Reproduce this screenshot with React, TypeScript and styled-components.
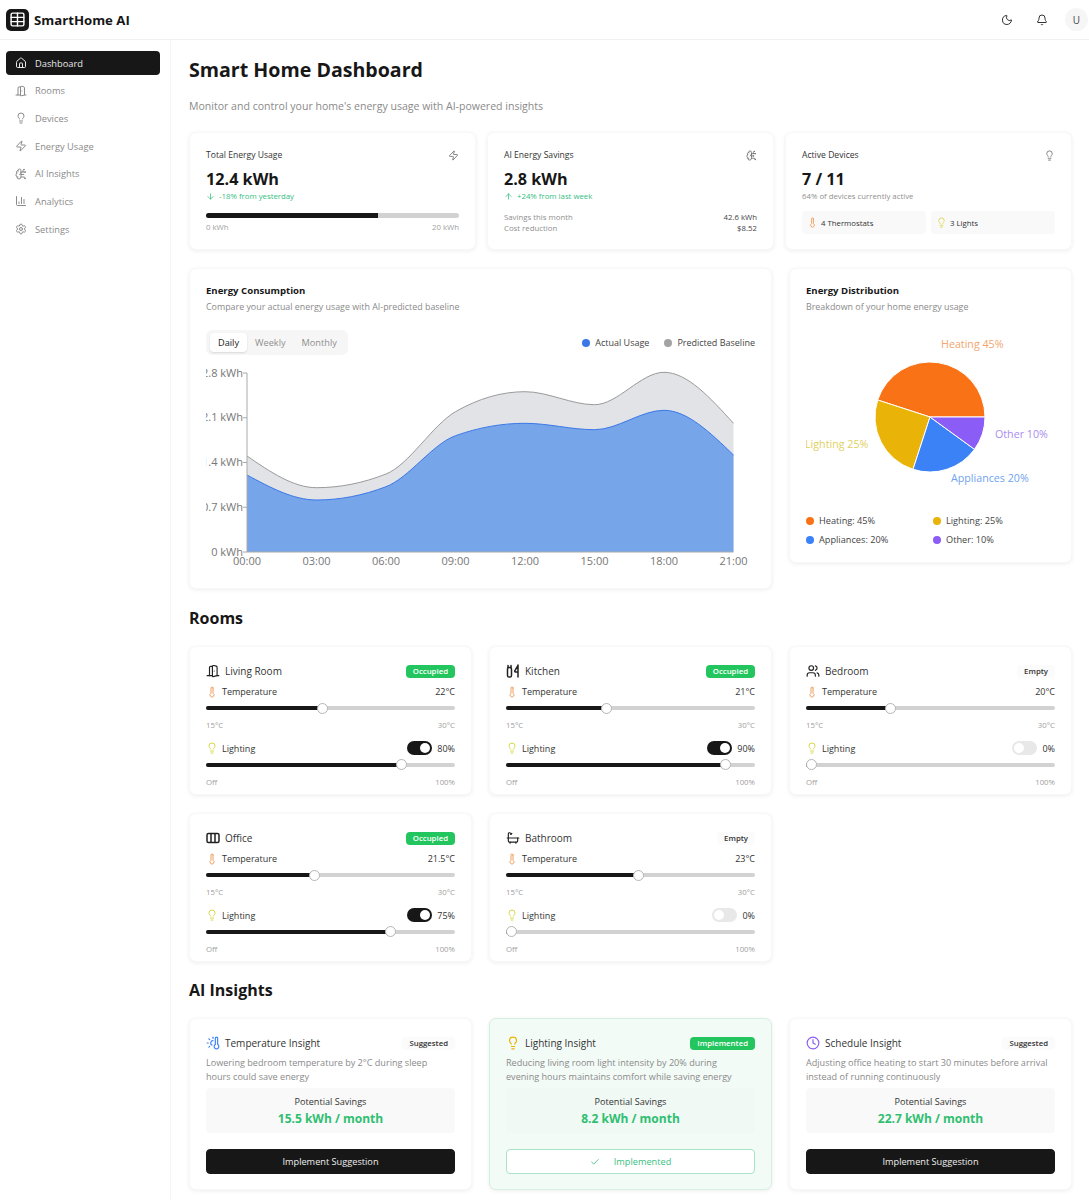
import { FC, ReactNode } from 'react'
import styled, { createGlobalStyle } from 'styled-components'
import {
  Bath,
  Bell,
  BrainCircuit,
  ChartColumn,
  Check,
  Clock,
  DoorOpen,
  House,
  Lightbulb,
  Moon,
  Settings,
  Table,
  Thermometer,
  ThermometerSun,
  Users,
  Zap,
  ArrowDown,
  ArrowUp,
} from 'lucide-react'

const GlobalStyle = createGlobalStyle`
  body {
    margin: 0;
    background: #fff;
    color: #171717;
    font-family: "Open Sans", "Noto Sans", "Liberation Sans", sans-serif;
  }
`

const Page = styled.div`
  width: 1089px;
  height: 1200px;
  overflow: hidden;
`

const Header = styled.header`
  height: 39px;
  border-bottom: 1px solid #f0f0f0;
  display: flex;
  align-items: center;
  padding-left: 6px;
`

const LogoBox = styled.div`
  width: 23px;
  height: 22px;
  background: #171717;
  border-radius: 5px;
  display: flex;
  align-items: center;
  justify-content: center;
  color: #fff;
`

const Brand = styled.div`
  margin-left: 5px;
  font-size: 13.2px;
  font-weight: 700;
  flex: 1;
`

const HeaderIcon = styled.div`
  width: 35px;
  display: flex;
  justify-content: center;
  color: #333;
`

const Avatar = styled.div`
  width: 23px;
  height: 23px;
  margin: 0 1px 0 6px;
  border-radius: 50%;
  background: #f6f6f6;
  font-size: 10px;
  color: #444;
  display: flex;
  align-items: center;
  justify-content: center;
`

const Body = styled.div`
  display: flex;
  height: 1160px;
`

const Sidebar = styled.nav`
  width: 171px;
  flex: none;
  box-sizing: border-box;
  border-right: 1px solid #f5f5f5;
  padding: 11px 10px 0 6px;
  display: flex;
  flex-direction: column;
  gap: 3.7px;
`

const NavItem = styled.div<{ $active?: boolean }>`
  height: 24px;
  border-radius: 4px;
  display: flex;
  align-items: center;
  gap: 8px;
  padding-left: 9px;
  font-size: 9.3px;
  background: ${p => (p.$active ? '#171717' : 'transparent')};
  color: ${p => (p.$active ? '#e8e8e8' : '#8a8a8a')};
`

const Main = styled.main`
  flex: 1;
  min-width: 0;
  padding: 15px 17px 0 18px;
`

const Title = styled.h1`
  margin: 0;
  font-size: 19.6px;
  line-height: 30px;
  font-weight: 700;
`

const Subtitle = styled.p`
  margin: 13px 0 18px;
  font-size: 10.55px;
  line-height: 16px;
  color: #8a8a8a;
`

const StatGrid = styled.div`
  display: grid;
  grid-template-columns: repeat(3, 1fr);
  gap: 11px;
`

const Card = styled.section<{ $done?: boolean }>`
  box-sizing: border-box;
  border-radius: 7px;
  background: ${p => (p.$done ? '#f3fbf7' : '#fff')};
  border: 1px solid ${p => (p.$done ? '#d3f0e0' : '#f8f8f8')};
  box-shadow: 0 1px 4px rgba(0, 0, 0, 0.07);
  padding: 16px;
`

const StatCard = styled(Card)`
  height: 118px;
  padding-top: 14px;
`

const StatHead = styled.div`
  display: flex;
  justify-content: space-between;
  align-items: center;
  height: 16px;
  font-size: 8.6px;
  color: #333;
`

const StatValue = styled.div`
  margin-top: 6px;
  height: 21px;
  line-height: 21px;
  font-size: 16.2px;
  font-weight: 700;
`

const Delta = styled.div`
  height: 12px;
  font-size: 7.8px;
  color: #34c07f;
  display: flex;
  align-items: center;
  gap: 4px;
`

const Muted = styled.div`
  height: 12px;
  line-height: 12px;
  font-size: 7.8px;
  color: #8f8f8f;
`

const Progress = styled.div`
  margin-top: 11px;
  height: 5px;
  border-radius: 3px;
  background: #d2d2d2;
  overflow: hidden;
`

const ProgressFill = styled.div`
  height: 100%;
  background: #171717;
`

const Scale = styled.div`
  display: flex;
  justify-content: space-between;
  font-size: 7.8px;
  line-height: 12px;
  color: #a0a0a0;
`

const ProgressScale = styled(Scale)`
  margin-top: 3px;
`

const FactRow = styled(Scale)`
  line-height: 11px;
  color: #8f8f8f;

  b {
    font-weight: 400;
    color: #444;
  }
`

const Facts = styled.div`
  margin-top: 10px;
`

const Chips = styled.div`
  margin-top: 9px;
  display: grid;
  grid-template-columns: 1fr 1fr;
  gap: 5px;
`

const Chip = styled.div`
  height: 23px;
  border-radius: 4px;
  background: #f9f9f9;
  display: flex;
  align-items: center;
  gap: 3px;
  padding-left: 5px;
  font-size: 7.8px;
  color: #333;
`

const ChartRow = styled.div`
  margin-top: 18px;
  display: grid;
  grid-template-columns: minmax(0, 1fr) 283px;
  gap: 17px;
  align-items: start;
`

const ChartCard = styled(Card)`
  height: 321px;
  padding-top: 14px;
`

const DistCard = styled(Card)`
  height: 295px;
  padding-top: 14px;
`

const CardTitle = styled.h3`
  margin: 0;
  font-size: 9.6px;
  line-height: 16px;
  font-weight: 700;
`

const CardSub = styled.div`
  font-size: 8.9px;
  line-height: 16px;
  color: #8a8a8a;
`

const ChartControls = styled.div`
  margin-top: 15px;
  display: flex;
  justify-content: space-between;
  align-items: center;
`

const Tabs = styled.div`
  width: 142px;
  height: 25px;
  box-sizing: border-box;
  padding: 3px 4px;
  border-radius: 6px;
  background: #f6f6f6;
  display: flex;
  gap: 0;
`

const Tab = styled.div<{ $active?: boolean }>`
  padding: 0 8px;
  border-radius: 4px;
  font-size: 9.2px;
  line-height: 19px;
  color: ${p => (p.$active ? '#222' : '#8f8f8f')};
  background: ${p => (p.$active ? '#fff' : 'transparent')};
  box-shadow: ${p => (p.$active ? '0 1px 2px rgba(0,0,0,.12)' : 'none')};
`

const Legend = styled.div`
  display: flex;
  gap: 15px;
  font-size: 9px;
  color: #444;
`

const LegendItem = styled.div`
  display: flex;
  align-items: center;
  gap: 5px;
`

const Dot = styled.span<{ $color: string }>`
  width: 8px;
  height: 8px;
  border-radius: 50%;
  flex: none;
  background: ${p => p.$color};
`

const ChartSvg = styled.svg`
  display: block;
  margin-top: 10px;
  font-family: "Open Sans", "Noto Sans", sans-serif;
`

const PieSvg = styled.svg`
  display: block;
  margin-top: 13px;
  font-family: "Open Sans", "Noto Sans", sans-serif;
`

const DistLegend = styled.div`
  margin-top: 13px;
  display: grid;
  grid-template-columns: 127px 1fr;
  row-gap: 3px;
  font-size: 9.2px;
  line-height: 16px;
  color: #444;
`

const SectionTitle = styled.h2`
  margin: 17px 0 16px;
  font-size: 16px;
  line-height: 24px;
  font-weight: 700;
`

const InsightsTitle = styled(SectionTitle)`
  margin-top: 16px;
`

const RoomGrid = styled.div`
  display: grid;
  grid-template-columns: repeat(3, 283px);
  gap: 18px 17px;
`

const RoomCard = styled(Card)`
  height: 149px;
`

const CardHead = styled.div`
  height: 16px;
  display: flex;
  align-items: center;
  justify-content: space-between;
`

const HeadName = styled.div`
  display: flex;
  align-items: center;
  gap: 5px;
  font-size: 10px;
  color: #333;
`

const Badge = styled.span<{ $on: boolean }>`
  height: 13px;
  line-height: 13px;
  padding: 0 7px;
  border-radius: 4px;
  font-size: 7.8px;
  font-weight: 600;
  color: ${p => (p.$on ? '#fff' : '#333')};
  background: ${p => (p.$on ? '#22c55e' : '#fbfbfb')};
`

const Control = styled.div<{ $gap: number }>`
  margin-top: ${p => p.$gap}px;
`

const ControlRow = styled.div`
  height: 16px;
  box-sizing: border-box;
  padding-bottom: 1px;
  display: flex;
  align-items: center;
  font-size: 9px;
  color: #333;
`

const ControlLabel = styled.div`
  flex: 1;
  display: flex;
  align-items: center;
  gap: 4px;
`

const SliderBox = styled.div`
  position: relative;
  height: 16px;
  display: flex;
  align-items: center;
`

const SliderTrack = styled.div`
  width: 100%;
  height: 4px;
  border-radius: 2px;
  background: #d2d2d2;
`

const SliderFill = styled.div`
  height: 100%;
  border-radius: 2px;
  background: #171717;
`

const SliderThumb = styled.div`
  position: absolute;
  top: 2.5px;
  width: 11px;
  height: 11px;
  box-sizing: border-box;
  margin-left: -5.5px;
  border-radius: 50%;
  background: #fff;
  border: 1px solid #b5b5b5;
`

const SliderScale = styled(Scale)`
  margin-top: 3px;
`

const Toggle = styled.div<{ $on: boolean }>`
  width: 25px;
  height: 14px;
  box-sizing: border-box;
  padding: 2px;
  margin-right: 5px;
  border-radius: 7px;
  background: ${p => (p.$on ? '#171717' : '#e8e8e8')};
  display: flex;
  justify-content: ${p => (p.$on ? 'flex-end' : 'flex-start')};

  &::after {
    content: '';
    width: 10px;
    height: 10px;
    border-radius: 50%;
    background: #fff;
  }
`

const InsightCard = styled(Card)`
  height: 172px;
`

const InsightText = styled.p`
  margin: 5px 0 4px;
  padding-right: 5px;
  font-size: 9.1px;
  line-height: 14px;
  color: #8a8a8a;
`

const SavingsBox = styled.div<{ $done?: boolean }>`
  height: 45px;
  box-sizing: border-box;
  padding-top: 6px;
  border-radius: 4px;
  background: ${p => (p.$done ? 'rgba(0, 0, 0, 0.006)' : 'rgba(0, 0, 0, 0.025)')};
  text-align: center;
  font-size: 9.1px;
  line-height: 15px;
  color: #333;
`

const SavingsValue = styled.div`
  font-size: 12px;
  line-height: 19px;
  font-weight: 700;
  color: #2fbf71;
`

const ActionButton = styled.button<{ $done?: boolean }>`
  width: 100%;
  height: 25px;
  margin-top: 16px;
  border-radius: 4px;
  font-family: inherit;
  font-size: 9.2px;
  display: flex;
  align-items: center;
  justify-content: center;
  gap: 14px;
  color: ${p => (p.$done ? '#38c07f' : '#eee')};
  background: ${p => (p.$done ? '#fff' : '#171717')};
  border: 1px solid ${p => (p.$done ? '#a8e3c6' : '#171717')};
`

const ORANGE = '#f0a060'
const YELLOW = '#d9d94a'

const KitchenIcon: FC<{ size: number; color: string }> = ({ size, color }) => (
  <svg width={size} height={size} viewBox="0 0 14 14" fill="none" stroke={color} strokeWidth={1.5} strokeLinecap="round">
    <path d="M2 1.5v2M5 1.5v2" />
    <rect x="1.5" y="3.5" width="4" height="9.5" rx="1.6" />
    <path d="M12 1v12M12 1.5L8.8 6.8c-.3.7 0 1.2.7 1.2H12" />
  </svg>
)

const OfficeIcon: FC<{ size: number; color: string }> = ({ size, color }) => (
  <svg width={size} height={size} viewBox="0 0 14 14" fill="none" stroke={color} strokeWidth={1.5}>
    <rect x="1" y="2.5" width="12" height="9" rx="1.5" />
    <path d="M5 2.5v9M9 2.5v9" />
  </svg>
)

const navItems = [
  { label: 'Dashboard', icon: House, active: true },
  { label: 'Rooms', icon: DoorOpen },
  { label: 'Devices', icon: Lightbulb },
  { label: 'Energy Usage', icon: Zap },
  { label: 'AI Insights', icon: BrainCircuit },
  { label: 'Analytics', icon: ChartColumn },
  { label: 'Settings', icon: Settings },
]

const rooms = [
  { name: 'Living Room', icon: DoorOpen, on: true, temp: 22, light: 80 },
  { name: 'Kitchen', icon: KitchenIcon, on: true, temp: 21, light: 90 },
  { name: 'Bedroom', icon: Users, on: false, temp: 20, light: 0 },
  { name: 'Office', icon: OfficeIcon, on: true, temp: 21.5, light: 75 },
  { name: 'Bathroom', icon: Bath, on: false, temp: 23, light: 0 },
]

const insights = [
  {
    title: 'Temperature Insight',
    icon: <ThermometerSun size={14} color="#3b82f6" />,
    text: 'Lowering bedroom temperature by 2°C during sleep hours could save energy',
    saving: '15.5 kWh / month',
    done: false,
  },
  {
    title: 'Lighting Insight',
    icon: <Lightbulb size={14} color="#eab308" />,
    text: 'Reducing living room light intensity by 20% during evening hours maintains comfort while saving energy',
    saving: '8.2 kWh / month',
    done: true,
  },
  {
    title: 'Schedule Insight',
    icon: <Clock size={14} color="#8b5cf6" />,
    text: 'Adjusting office heating to start 30 minutes before arrival instead of running continuously',
    saving: '22.7 kWh / month',
    done: false,
  },
]

// svg coordinates of the area chart, measured from y=0 kWh
const hours = ['00:00', '03:00', '06:00', '09:00', '12:00', '15:00', '18:00', '21:00']
const predicted = [96, 64.3, 78, 140.3, 160.3, 147.3, 179.7, 128.7]
const actual = [77, 52, 65.3, 116.3, 128.7, 122.3, 141.7, 97]

const CHART_X0 = 41
const CHART_STEP = 69.5
const CHART_BASE = 187

// same maths as d3 curveMonotoneX, which the chart libraries use
const monotonePath = (values: number[]) => {
  const pts = values.map((v, i) => [CHART_X0 + i * CHART_STEP, CHART_BASE - v])
  const last = pts.length - 1
  const slopes = pts.slice(1).map((p, i) => (p[1] - pts[i][1]) / CHART_STEP)
  const tangents = pts.map((_, i) => {
    if (i === 0 || i === last) return 0
    const a = slopes[i - 1]
    const b = slopes[i]
    if (a * b <= 0) return 0
    return Math.sign(a) * Math.min(2 * Math.abs(a), 2 * Math.abs(b), Math.abs(a + b) / 2)
  })
  tangents[0] = (3 * slopes[0] - tangents[1]) / 2
  tangents[last] = (3 * slopes[last - 1] - tangents[last - 1]) / 2
  const h = CHART_STEP / 3
  let d = `M${pts[0][0]},${pts[0][1]}`
  for (let i = 1; i < pts.length; i++) {
    d += `C${pts[i - 1][0] + h},${pts[i - 1][1] + tangents[i - 1] * h} ${pts[i][0] - h},${pts[i][1] - tangents[i] * h} ${pts[i][0]},${pts[i][1]}`
  }
  return d
}

const closeArea = (line: string) =>
  `${line}L${CHART_X0 + 7 * CHART_STEP},${CHART_BASE}L${CHART_X0},${CHART_BASE}Z`

const AreaChart: FC = () => {
  const top = monotonePath(predicted)
  const bottom = monotonePath(actual)
  const ticks = ['0 kWh', '0.7 kWh', '1.4 kWh', '2.1 kWh', '2.8 kWh']
  return (
    <ChartSvg width={549} height={213} viewBox="0 0 549 213">
      <path d={closeArea(top)} fill="#9ca3af" fillOpacity={0.3} />
      <path d={top} fill="none" stroke="#9a9a9a" strokeWidth={1} />
      <path d={closeArea(bottom)} fill="#6d9fe9" fillOpacity={0.92} />
      <path d={bottom} fill="none" stroke="#3b78e7" strokeWidth={1} />
      <path d={`M${CHART_X0},8V${CHART_BASE}H${CHART_X0 + 7 * CHART_STEP}`} fill="none" stroke="#aaa" />
      {ticks.map((t, i) => {
        const y = CHART_BASE - i * 44.75
        return (
          <g key={t}>
            <line x1={CHART_X0 - 4} x2={CHART_X0} y1={y} y2={y} stroke="#aaa" />
            <text x={CHART_X0 - 4} y={y + 3.5} textAnchor="end" fontSize={11} fill="#777">
              {t}
            </text>
          </g>
        )
      })}
      {hours.map((h, i) => (
        <text key={h} x={CHART_X0 + i * CHART_STEP} y={200} textAnchor="middle" fontSize={11} fill="#777">
          {h}
        </text>
      ))}
    </ChartSvg>
  )
}

const slices = [
  { name: 'Heating', pct: 45, color: '#f97316', label: '#f2a56e', x: 135, y: 20 },
  { name: 'Lighting', pct: 25, color: '#eab308', label: '#e0d060', x: -1, y: 120 },
  { name: 'Appliances', pct: 20, color: '#3b82f6', label: '#6fa3ee', x: 145, y: 154 },
  { name: 'Other', pct: 10, color: '#8b5cf6', label: '#a98df0', x: 189, y: 110 },
]

const PieChart: FC = () => {
  const cx = 124
  const cy = 89
  const r = 55
  let start = 0
  return (
    <PieSvg width={250} height={172} viewBox="0 0 250 172">
      {slices.map(s => {
        const end = start + (s.pct / 100) * Math.PI * 2
        const d = `M${cx},${cy}L${cx + r * Math.cos(start)},${cy - r * Math.sin(start)}A${r},${r} 0 0 0 ${cx + r * Math.cos(end)},${cy - r * Math.sin(end)}Z`
        start = end
        return <path key={s.name} d={d} fill={s.color} stroke="#fff" strokeWidth={1} />
      })}
      {slices.map(s => (
        <text key={s.name} x={s.x} y={s.y} fontSize={10.7} fill={s.label}>
          {s.name} {s.pct}%
        </text>
      ))}
    </PieSvg>
  )
}

const Slider: FC<{ pct: number }> = ({ pct }) => (
  <SliderBox>
    <SliderTrack>
      <SliderFill style={{ width: `calc(5.5px + (100% - 11px) * ${pct / 100})` }} />
    </SliderTrack>
    <SliderThumb style={{ left: `calc(5.5px + (100% - 11px) * ${pct / 100})` }} />
  </SliderBox>
)

const Room: FC<(typeof rooms)[number]> = ({ name, icon: Icon, on, temp, light }) => (
  <RoomCard>
    <CardHead>
      <HeadName>
        <Icon size={14} color="#222" />
        {name}
      </HeadName>
      <Badge $on={on}>{on ? 'Occupied' : 'Empty'}</Badge>
    </CardHead>
    <Control $gap={5}>
      <ControlRow>
        <ControlLabel>
          <Thermometer size={12} color={ORANGE} />
          Temperature
        </ControlLabel>
        {temp}°C
      </ControlRow>
      <Slider pct={((temp - 15) / 15) * 100} />
      <SliderScale>
        <span>15°C</span>
        <span>30°C</span>
      </SliderScale>
    </Control>
    <Control $gap={9.5}>
      <ControlRow>
        <ControlLabel>
          <Lightbulb size={12} color={YELLOW} />
          Lighting
        </ControlLabel>
        <Toggle $on={light > 0} />
        {light}%
      </ControlRow>
      <Slider pct={light} />
      <SliderScale>
        <span>Off</span>
        <span>100%</span>
      </SliderScale>
    </Control>
  </RoomCard>
)

const Stat: FC<{ title: string; icon: ReactNode; value: string; children: ReactNode }> = ({
  title,
  icon,
  value,
  children,
}) => (
  <StatCard>
    <StatHead>
      {title}
      {icon}
    </StatHead>
    <StatValue>{value}</StatValue>
    {children}
  </StatCard>
)

const App: FC = () => (
  <Page>
    <GlobalStyle />
    <Header>
      <LogoBox>
        <Table size={17} />
      </LogoBox>
      <Brand>SmartHome AI</Brand>
      <HeaderIcon>
        <Moon size={12} />
      </HeaderIcon>
      <HeaderIcon>
        <Bell size={12} />
      </HeaderIcon>
      <Avatar>U</Avatar>
    </Header>
    <Body>
      <Sidebar>
        {navItems.map(({ label, icon: Icon, active }) => (
          <NavItem key={label} $active={active}>
            <Icon size={12} />
            {label}
          </NavItem>
        ))}
      </Sidebar>
      <Main>
        <Title>Smart Home Dashboard</Title>
        <Subtitle>Monitor and control your home's energy usage with AI-powered insights</Subtitle>

        <StatGrid>
          <Stat title="Total Energy Usage" value="12.4 kWh" icon={<Zap size={11} color="#777" />}>
            <Delta>
              <ArrowDown size={9} />
              -18% from yesterday
            </Delta>
            <Progress>
              <ProgressFill style={{ width: '68%' }} />
            </Progress>
            <ProgressScale>
              <span>0 kWh</span>
              <span>20 kWh</span>
            </ProgressScale>
          </Stat>
          <Stat title="AI Energy Savings" value="2.8 kWh" icon={<BrainCircuit size={11} color="#777" />}>
            <Delta>
              <ArrowUp size={9} />
              +24% from last week
            </Delta>
            <Facts>
              <FactRow>
                <span>Savings this month</span>
                <b>42.6 kWh</b>
              </FactRow>
              <FactRow>
                <span>Cost reduction</span>
                <b>$8.52</b>
              </FactRow>
            </Facts>
          </Stat>
          <Stat title="Active Devices" value="7 / 11" icon={<Lightbulb size={11} color="#777" />}>
            <Muted>64% of devices currently active</Muted>
            <Chips>
              <Chip>
                <Thermometer size={11} color={ORANGE} />
                4 Thermostats
              </Chip>
              <Chip>
                <Lightbulb size={11} color={YELLOW} />
                3 Lights
              </Chip>
            </Chips>
          </Stat>
        </StatGrid>

        <ChartRow>
          <ChartCard>
            <CardTitle>Energy Consumption</CardTitle>
            <CardSub>Compare your actual energy usage with AI-predicted baseline</CardSub>
            <ChartControls>
              <Tabs>
                <Tab $active>Daily</Tab>
                <Tab>Weekly</Tab>
                <Tab>Monthly</Tab>
              </Tabs>
              <Legend>
                <LegendItem>
                  <Dot $color="#3b78e7" />
                  Actual Usage
                </LegendItem>
                <LegendItem>
                  <Dot $color="#a3a3a3" />
                  Predicted Baseline
                </LegendItem>
              </Legend>
            </ChartControls>
            <AreaChart />
          </ChartCard>
          <DistCard>
            <CardTitle>Energy Distribution</CardTitle>
            <CardSub>Breakdown of your home energy usage</CardSub>
            <PieChart />
            <DistLegend>
              {slices.map(s => (
                <LegendItem key={s.name}>
                  <Dot $color={s.color} />
                  {s.name}: {s.pct}%
                </LegendItem>
              ))}
            </DistLegend>
          </DistCard>
        </ChartRow>

        <SectionTitle>Rooms</SectionTitle>
        <RoomGrid>
          {rooms.map(room => (
            <Room key={room.name} {...room} />
          ))}
        </RoomGrid>

        <InsightsTitle>AI Insights</InsightsTitle>
        <RoomGrid>
          {insights.map(item => (
            <InsightCard key={item.title} $done={item.done}>
              <CardHead>
                <HeadName>
                  {item.icon}
                  {item.title}
                </HeadName>
                <Badge $on={item.done}>{item.done ? 'Implemented' : 'Suggested'}</Badge>
              </CardHead>
              <InsightText>{item.text}</InsightText>
              <SavingsBox $done={item.done}>
                Potential Savings
                <SavingsValue>{item.saving}</SavingsValue>
              </SavingsBox>
              <ActionButton $done={item.done}>
                {item.done && <Check size={10} />}
                {item.done ? 'Implemented' : 'Implement Suggestion'}
              </ActionButton>
            </InsightCard>
          ))}
        </RoomGrid>
      </Main>
    </Body>
  </Page>
)

export default App
